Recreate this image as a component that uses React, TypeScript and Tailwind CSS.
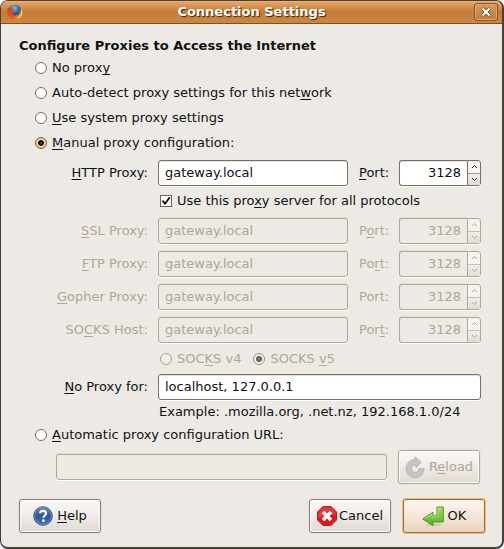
import type { ReactNode } from "react";

const FIELD =
  "h-[26px] min-w-0 rounded-[3px] border border-[#7c6f62] bg-white px-1.5 pb-0.5 text-[#111] shadow-[0_1px_0_#fff,inset_0_1px_0_#e4e0dc] outline-none disabled:border-[#b5a593] disabled:bg-[#edeae6] disabled:text-[#b3a595] disabled:shadow-[0_1px_0_#fff,0_-1px_0_#e3dcd6]";

const BUTTON =
  "flex h-[34px] w-[82px] items-center justify-center rounded-[3px] border bg-linear-to-b from-[#fbfaf9] via-[#efebe8] to-[#e0d9d3] shadow-[0_0_0_1px_#e6e1dc,inset_0_0_0_1px_#fbfaf9]";

function Key({ children }: { children: ReactNode }) {
  return (
    <span className="underline decoration-1 underline-offset-2 [text-decoration-skip-ink:none]">
      {children}
    </span>
  );
}

function Radio({
  name,
  checked = false,
  disabled = false,
  children,
}: {
  name: string;
  checked?: boolean;
  disabled?: boolean;
  children: ReactNode;
}) {
  return (
    <label className={`flex items-center gap-[5px] ${disabled ? "text-[#b3a595]" : ""}`}>
      <input
        type="radio"
        name={name}
        defaultChecked={checked}
        disabled={disabled}
        className="size-3 shrink-0 appearance-none rounded-full border border-[#7c6f62] bg-white checked:border-[#8d5c2a] checked:bg-[radial-gradient(circle_at_5px_5px,#666_0,#111_1.5px,#111_2.5px,#fbe3c8_3.5px,#f3b877_5px)] disabled:border-[#b0a090] disabled:bg-[#efece9] disabled:checked:border-[#a39281] disabled:checked:bg-[radial-gradient(circle_at_5px_5px,#a09890_0,#695f57_1.5px,#695f57_2.5px,#efece9_3.5px)]"
      />
      <span>{children}</span>
    </label>
  );
}

function Chevron({ up = false }: { up?: boolean }) {
  return (
    <svg viewBox="0 0 7 5" className="h-[5px] w-[7px]" fill="none" stroke="currentColor">
      <path d={up ? "M1 4 3.5 1.500 6 4" : "M1 1l2.500 2.500L6 1"} />
    </svg>
  );
}

function ProxyRow({
  id,
  label,
  portLabel,
  disabled = false,
}: {
  id: string;
  label: ReactNode;
  portLabel: ReactNode;
  disabled?: boolean;
}) {
  return (
    <div className={`flex items-center ${disabled ? "text-[#b3a595]" : ""}`}>
      <label htmlFor={id} className="w-[129px] shrink-0 text-right">
        {label}
      </label>
      <input
        id={id}
        type="text"
        defaultValue="gateway.local"
        disabled={disabled}
        className={`ml-2.5 flex-1 ${FIELD}`}
      />
      <label htmlFor={`${id}-port`} className="ml-[11px] w-10 shrink-0">
        {portLabel}
      </label>
      <div className="flex w-[82px] shrink-0">
        <input
          id={`${id}-port`}
          type="text"
          defaultValue="3128"
          disabled={disabled}
          className={`flex-1 rounded-r-none border-r-0 text-right ${FIELD}`}
        />
        <div
          className={`flex h-[26px] w-3.5 flex-col rounded-r-[3px] border bg-[#f5f2f0] shadow-[0_1px_0_#fff] ${
            disabled ? "border-[#b5a593] text-[#b3a595]" : "border-[#7c6f62] text-[#333]"
          }`}
        >
          <button
            type="button"
            aria-label="Increase port"
            disabled={disabled}
            className={`flex flex-1 items-center justify-center border-b ${disabled ? "border-[#c9beb3]" : "border-[#a4988c]"}`}
          >
            <Chevron up />
          </button>
          <button
            type="button"
            aria-label="Decrease port"
            disabled={disabled}
            className="flex flex-1 items-center justify-center bg-linear-to-b from-[#f1edea] to-[#e2dcd6]"
          >
            <Chevron />
          </button>
        </div>
      </div>
    </div>
  );
}

function FirefoxIcon() {
  return (
    <svg viewBox="0 0 16 16" className="size-4">
      <defs>
        <radialGradient id="globe" cx=".45" cy=".25" r=".8">
          <stop offset="0" stopColor="#76c4e8" />
          <stop offset=".45" stopColor="#2b68ae" />
          <stop offset="1" stopColor="#142c68" />
        </radialGradient>
        <linearGradient id="fox" x1="0" y1="0" x2="1" y2="1">
          <stop offset="0" stopColor="#c9450f" />
          <stop offset=".55" stopColor="#e2571a" />
          <stop offset="1" stopColor="#f4b52c" />
        </linearGradient>
      </defs>
      <circle cx="8" cy="7.5" r="6.7" fill="url(#globe)" />
      <path
        d="M1.5 2.5C.2 5 0 8 .8 10.3 2 13.7 5 15.7 8.2 15.6c4.2 0 7.3-3.2 7.4-7.3 0-2.2-.8-4.3-2.4-5.6.8 1.5.9 2.9.6 3.8-.2-1.2-.8-2.200-1.600-2.800 1 2.500.8 5-.8 6.500-1.500 1.500-4 1.500-5.400.4C4.800 9.700 4.700 8.500 5.500 8c.6-.3 1.500.1 2.200-.4-.2-1-1.300-1.300-1.900-1.500.1-.8.700-1.200 1.300-1.700C6 4.200 5 4.400 4.300 5c-.9-.3-1.700-.2-2 .1-.4-.8-.7-1.500-.8-2.600Z"
        fill="url(#fox)"
      />
      <path d="M13.800 4.200c1.300 4-.4 8.600-4.500 9.900 3.700.2 6.100-2.300 6.100-5.900 0-1.500-.7-3.100-1.600-4Z" fill="#fbd84b" />
    </svg>
  );
}

function HelpIcon() {
  return (
    <svg viewBox="0 0 20 20" className="size-5">
      <defs>
        <linearGradient id="help" x1="0" y1="0" x2="0" y2="1">
          <stop offset="0" stopColor="#6189bd" />
          <stop offset=".5" stopColor="#2c5795" />
          <stop offset="1" stopColor="#3d73b8" />
        </linearGradient>
      </defs>
      <circle cx="10" cy="10" r="9.3" fill="url(#help)" stroke="#2f568e" strokeWidth=".9" />
      <circle cx="10" cy="10" r="8.3" fill="none" stroke="#84a6d1" strokeWidth=".6" />
      <path
        d="M7 7.200C7.400 5.500 8.600 4.900 10 4.900c1.700 0 3 .9 3 2.500 0 2-2.500 2.200-2.500 4.400"
        fill="none"
        stroke="#fff"
        strokeWidth="2.200"
      />
      <circle cx="10.4" cy="14.7" r="1.4" fill="#fff" />
    </svg>
  );
}

function CancelIcon() {
  return (
    <svg viewBox="0 0 20 20" className="size-5">
      <path d="M6 .5h8L19.500 6v8L14 19.500H6L.5 14V6Z" fill="#d9171f" stroke="#b91d24" />
      <path d="M6.400 1.500h7.200l4.900 4.900v3C13 8.600 7 9.500 1.500 12.500V6.400Z" fill="#e65458" opacity=".6" />
      <path d="m6 6 8 8M14 6l-8 8" stroke="#fff" strokeWidth="3.600" />
    </svg>
  );
}

function OkIcon() {
  return (
    <svg viewBox="0 0 22 21" className="h-[21px] w-[22px]">
      <defs>
        <linearGradient id="enter" x1="0" y1="0" x2="0" y2="1">
          <stop offset="0" stopColor="#9bd865" />
          <stop offset=".5" stopColor="#78c93c" />
          <stop offset="1" stopColor="#4fb01c" />
        </linearGradient>
      </defs>
      <ellipse cx="12" cy="18.7" rx="8" ry="1.500" fill="#00000018" />
      <path d="M15 1h6.300v15H11v3.800L.8 13 11 6.200V10h4Z" fill="url(#enter)" stroke="#53952b" />
      <path d="M16 10.500V2h4.300M2.700 12.800 10 8v3h5.500" fill="none" stroke="#b9e894" strokeWidth=".7" />
    </svg>
  );
}

function ReloadIcon() {
  return (
    <svg viewBox="0 0 20 22" className="h-[22px] w-5">
      <path
        d="M10 3.500V.8l6.200 5.400L11 11.500V8.800C8 8.600 6.300 10.500 6.300 12.700c0 2.200 1.700 3.800 3.900 3.800 2.300 0 3.600-1.500 3.800-3.700h5c-.1 5-3.800 8.700-8.700 8.700-5.200 0-9.200-3.800-9.200-8.700C1.100 7.600 5 3.700 10 3.500Z"
        fill="#c6c5c4"
        stroke="#adabaa"
        strokeWidth=".8"
      />
    </svg>
  );
}

export default function App() {
  return (
    <div className="bg-white font-['DejaVu_Sans',sans-serif] text-[13px] leading-4 text-[#111]">
      <div className="overflow-hidden rounded-lg border-t border-r-2 border-b-2 border-l border-[#46403b] bg-[#edeae6]">
        <header className="flex h-[23px] items-center border-b border-[#7d5025] bg-linear-to-b from-[#eba764] via-[#c47c38] to-[#cc8843] pr-1 pl-1.5 shadow-[inset_0_1px_0_#e8b07a]">
          <div className="flex w-[22px] shrink-0">
            <FirefoxIcon />
          </div>
          <h1 className="flex-1 text-center font-bold text-white [text-shadow:1px_1px_1px_#3d2409]">
            Connection Settings
          </h1>
          <button
            type="button"
            aria-label="Close"
            className="flex h-[18px] w-6 shrink-0 items-center justify-center rounded-[3px] border border-[#855527] bg-linear-to-b from-[#d79a61] to-[#bd7b3d] shadow-[inset_0_0_0_1px_#dcaa79]"
          >
            <svg viewBox="0 0 10 10" className="size-2.5">
              <path d="m1.500 1.500 7 7M8.500 1.500l-7 7" stroke="#583510" strokeWidth="3.400" />
              <path d="m1.500 1.500 7 7M8.500 1.500l-7 7" stroke="#fff" strokeWidth="2.200" />
            </svg>
          </button>
        </header>

        <form className="pt-3 pr-[17px] pb-3.5 pl-[18px]" onSubmit={(e) => e.preventDefault()}>
          <fieldset className="pr-1">
            <legend className="h-[19px] leading-5 font-bold">Configure Proxies to Access the Internet</legend>

            <div className="grid auto-rows-[25px] pl-4">
              <Radio name="mode">
                No prox<Key>y</Key>
              </Radio>
              <Radio name="mode">
                Auto-detect proxy settings for this net<Key>w</Key>ork
              </Radio>
              <Radio name="mode">
                <Key>U</Key>se system proxy settings
              </Radio>
              <Radio name="mode" checked>
                <Key>M</Key>anual proxy configuration:
              </Radio>
            </div>

            <div className="pt-[5px]">
              <ProxyRow id="http" label={<><Key>H</Key>TTP Proxy:</>} portLabel={<><Key>P</Key>ort:</>} />
            </div>

            <label className="flex h-8 items-center gap-[5px] pb-0.5 pl-[141px]">
              <span className="relative flex size-3 shrink-0">
                <input
                  type="checkbox"
                  defaultChecked
                  className="peer size-3 appearance-none border border-[#6f6459] bg-white"
                />
                <svg
                  viewBox="0 0 12 12"
                  className="pointer-events-none absolute inset-0 hidden size-3 peer-checked:block"
                  fill="none"
                  stroke="#111"
                  strokeWidth="1.800"
                >
                  <path d="M2.500 5.500 5 8.800 9.800 2.200" />
                </svg>
              </span>
              <span>
                Use this pro<Key>x</Key>y server for all protocols
              </span>
            </label>

            <div className="flex flex-col gap-[7px]">
              <ProxyRow id="ssl" disabled label={<><Key>S</Key>SL Proxy:</>} portLabel={<>P<Key>o</Key>rt:</>} />
              <ProxyRow id="ftp" disabled label={<><Key>F</Key>TP Proxy:</>} portLabel={<>Po<Key>r</Key>t:</>} />
              <ProxyRow id="gopher" disabled label={<><Key>G</Key>opher Proxy:</>} portLabel="Port:" />
              <ProxyRow id="socks" disabled label={<>SO<Key>C</Key>KS Host:</>} portLabel={<>Por<Key>t</Key>:</>} />
            </div>

            <div className="flex h-[31px] items-center gap-3 pl-[141px]">
              <Radio name="socks-version" disabled>
                SOC<Key>K</Key>S v4
              </Radio>
              <Radio name="socks-version" disabled checked>
                SOCKS <Key>v</Key>5
              </Radio>
            </div>

            <div className="flex items-center">
              <label htmlFor="no-proxy" className="w-[129px] shrink-0 text-right">
                <Key>N</Key>o Proxy for:
              </label>
              <input
                id="no-proxy"
                type="text"
                defaultValue="localhost, 127.0.0.1"
                className={`ml-2.5 flex-1 ${FIELD}`}
              />
            </div>
            <p className="h-[23px] pl-[140px] leading-6">Example: .mozilla.org, .net.nz, 192.168.1.0/24</p>

            <div className="grid h-6 pl-4">
              <Radio name="mode">
                <Key>A</Key>utomatic proxy configuration URL:
              </Radio>
            </div>
            <div className="flex items-center gap-[11px] pt-[3px] pr-px pl-[37px]">
              <input type="text" aria-label="Automatic proxy configuration URL" disabled className={`flex-1 ${FIELD}`} />
              <button type="button" disabled className={`shrink-0 gap-1 border-[#b5a593] text-[#b3a595] ${BUTTON}`}>
                <ReloadIcon />
                <span>
                  R<Key>e</Key>load
                </span>
              </button>
            </div>
          </fieldset>

          <div className="flex pt-[15px]">
            <button type="button" className={`gap-1 border-[#8c8074] ${BUTTON}`}>
              <HelpIcon />
              <span>
                <Key>H</Key>elp
              </span>
            </button>
            <button type="button" className={`ml-auto gap-0.5 border-[#8c8074] ${BUTTON}`}>
              <CancelIcon />
              <span>Cancel</span>
            </button>
            <button
              type="submit"
              className="ml-3 flex h-[34px] w-[82px] items-center justify-center gap-1 rounded-[3px] border border-[#a9682c] bg-linear-to-b from-[#fbf5ee] via-[#f4e6d8] to-[#e8d3bf] shadow-[0_0_0_1px_#f0b97e]"
            >
              <OkIcon />
              <span>OK</span>
            </button>
          </div>
        </form>
      </div>
    </div>
  );
}
